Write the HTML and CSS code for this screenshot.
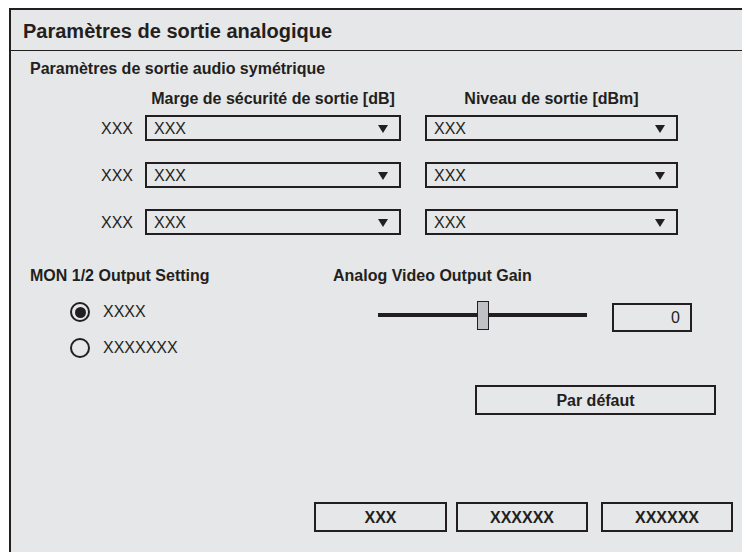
FILE: index.html
```html
<!DOCTYPE html>
<html lang="fr">
<head>
<meta charset="utf-8">
<link rel="stylesheet" href="styles.css">
</head>
<body>
<div class="dialog">
  <div class="titlebar">Paramètres de sortie analogique</div>
  <div class="content">
    <div class="section-title">Paramètres de sortie audio symétrique</div>
    <div class="grid grid-head">
      <div></div>
      <div class="col-head">Marge de sécurité de sortie [dB]</div>
      <div class="col-head">Niveau de sortie [dBm]</div>
    </div>
    <div class="grid grid-rows">
      <div class="row-label">XXX</div>
      <div class="select c1"><span>XXX</span><i class="arrow"></i></div>
      <div class="select c2"><span>XXX</span><i class="arrow"></i></div>
      <div class="row-label">XXX</div>
      <div class="select c1"><span>XXX</span><i class="arrow"></i></div>
      <div class="select c2"><span>XXX</span><i class="arrow"></i></div>
      <div class="row-label">XXX</div>
      <div class="select c1"><span>XXX</span><i class="arrow"></i></div>
      <div class="select c2"><span>XXX</span><i class="arrow"></i></div>
    </div>
    <div class="lower">
      <div class="left-col">
        <div class="group-title">MON 1/2 Output Setting</div>
        <div class="radios">
          <div class="radio-row"><span class="radio checked"></span><span>XXXX</span></div>
          <div class="radio-row"><span class="radio"></span><span>XXXXXXX</span></div>
        </div>
      </div>
      <div class="right-col">
        <div class="group-title">Analog Video Output Gain</div>
        <div class="slider-row">
          <div class="slider"><div class="track"></div><div class="thumb"></div></div>
          <div class="value-box">0</div>
        </div>
        <div class="btn btn-default">Par défaut</div>
      </div>
    </div>
    <div class="footer">
      <div class="btn btn-foot">XXX</div>
      <div class="btn btn-foot b2">XXXXXX</div>
      <div class="btn btn-foot b3">XXXXXX</div>
    </div>
  </div>
</div>
</body>
</html>
```

FILE: styles.css
```css
html, body {
  margin: 0;
  padding: 0;
  background: #ffffff;
  overflow: hidden;
}
body {
  width: 742px;
  height: 552px;
  font-family: "Liberation Sans", Arial, sans-serif;
  color: #231f20;
}
.dialog {
  margin: 8px 0 0 9px;
  width: 733px;
  height: 544px;
  border-top: 2px solid #231f20;
  border-left: 2px solid #231f20;
  background: #e6e7e8;
  box-sizing: border-box;
}
.titlebar {
  height: 41px;
  line-height: 40px;
  padding-left: 12px;
  padding-top: 1px;
  box-sizing: border-box;
  font-size: 20px;
  font-weight: bold;
  border-bottom: 1px solid #231f20;
}
.content {
  padding-left: 19px;
}
.section-title {
  margin-top: 8px;
  font-size: 16px;
  line-height: 20px;
  font-weight: bold;
}
.grid {
  display: grid;
  grid-template-columns: 115px 280px 253px;
}
.grid-head {
  margin-top: 10px;
  height: 20px;
}
.col-head {
  font-size: 16px;
  line-height: 20px;
  font-weight: bold;
  text-align: center;
}
.grid-head .col-head:nth-child(2) {
  width: 256px;
}
.grid-rows {
  margin-top: 6px;
  row-gap: 21px;
}
.row-label {
  height: 26px;
  font-size: 16px;
  line-height: 24px;
  padding-top: 2px;
  box-sizing: border-box;
  text-align: right;
  padding-right: 12px;
}
.select {
  height: 26px;
  border: 2px solid #231f20;
  box-sizing: border-box;
  display: flex;
  align-items: center;
  justify-content: space-between;
  padding: 2px 11px 0 7px;
  font-size: 16px;
}
.select.c1 { width: 256px; }
.select.c2 { width: 253px; }
.arrow {
  width: 0;
  height: 0;
  border-left: 5px solid transparent;
  border-right: 5px solid transparent;
  border-top: 8px solid #231f20;
}
.lower {
  margin-top: 31px;
  display: flex;
}
.left-col {
  width: 303px;
}
.group-title {
  font-size: 16px;
  line-height: 20px;
  font-weight: bold;
}
.radios {
  margin-top: 15px;
  padding-left: 40px;
  display: flex;
  flex-direction: column;
  gap: 14px;
}
.radio-row {
  height: 22px;
  display: flex;
  align-items: center;
  gap: 13px;
  font-size: 16px;
}
.radio {
  width: 20px;
  height: 20px;
  border: 2px solid #231f20;
  border-radius: 50%;
  box-sizing: border-box;
  display: flex;
  align-items: center;
  justify-content: center;
}
.radio.checked::after {
  content: "";
  width: 11px;
  height: 11px;
  border-radius: 50%;
  background: #231f20;
}
.right-col {
  flex: 1;
}
.slider-row {
  margin-top: 15px;
  display: flex;
  align-items: flex-start;
}
.slider {
  margin-left: 45px;
  width: 209px;
  height: 29px;
  position: relative;
}
.track {
  position: absolute;
  left: 0;
  right: 0;
  top: 12px;
  height: 4px;
  background: #231f20;
}
.thumb {
  position: absolute;
  left: 99px;
  top: 0;
  width: 12px;
  height: 29px;
  box-sizing: border-box;
  border: 1.5px solid #231f20;
  background: #c0c1c4;
}
.value-box {
  margin-left: 25px;
  margin-top: 2px;
  width: 80px;
  height: 29px;
  box-sizing: border-box;
  border: 2px solid #231f20;
  font-size: 16px;
  line-height: 26px;
  text-align: right;
  padding-right: 10px;
}
.btn {
  box-sizing: border-box;
  border: 2px solid #231f20;
  height: 30px;
  line-height: 27px;
  font-size: 16px;
  font-weight: bold;
  text-align: center;
}
.btn-default {
  margin-top: 53px;
  margin-left: 142px;
  width: 241px;
}
.footer {
  margin-top: 87px;
  padding-left: 284px;
  display: flex;
}
.btn-foot {
  width: 133px;
}
.btn-foot.b2 { margin-left: 9px; width: 132px; }
.btn-foot.b3 { margin-left: 13px; width: 132px; }
```
